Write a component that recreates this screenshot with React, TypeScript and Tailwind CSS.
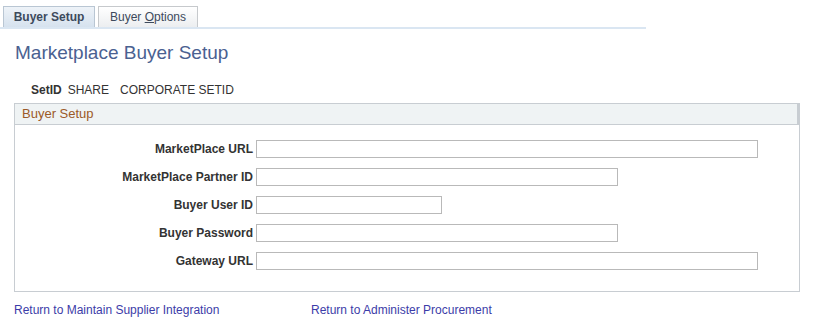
export default function App() {
  const fields = [
    { label: "MarketPlace URL", w: "w-[502px]" },
    { label: "MarketPlace Partner ID", w: "w-[362px]" },
    { label: "Buyer User ID", w: "w-[186px]" },
    { label: "Buyer Password", w: "w-[362px]" },
    { label: "Gateway URL", w: "w-[502px]" },
  ];

  return (
    <div className="w-[813px] h-[324px] bg-white text-[12px] text-[#333] font-['Liberation_Sans',Arial,sans-serif]">
      {/* Tabs */}
      <div className="pt-[6px] pl-[3px] w-[646px] border-b-[2px] border-[#dae6f2] flex items-end gap-[3px]">
        <div className="h-[21px] w-[92px] flex items-center justify-center border border-b-0 border-[#b9c6d3] bg-gradient-to-b from-[#eef3f8] to-[#d6e2ee] font-bold text-[#3d4a5c]">
          Buyer Setup
        </div>
        <div className="h-[21px] w-[100px] flex items-center justify-center border border-b-0 border-[#c6c9cc] bg-gradient-to-b from-[#ffffff] to-[#eceef0] text-[#3d4a5c]">
          Buyer&nbsp;<span className="underline">O</span>ptions
        </div>
      </div>

      {/* Title */}
      <h1 className="ml-[15px] mt-[12px] text-[19px] leading-[24px] text-[#4a6191]">
        Marketplace Buyer Setup
      </h1>

      {/* SetID row */}
      <div className="ml-[31px] mt-[18px] flex leading-[14px]">
        <span className="font-bold">SetID</span>
        <span className="ml-[6px]">SHARE</span>
        <span className="ml-[11px]">CORPORATE SETID</span>
      </div>

      {/* Group box */}
      <div className="ml-[14px] mt-[6px] w-[786px] h-[189px] border border-[#c8cdd2]">
        <div className="h-[21px] bg-[#eff3f4] border-b border-r-[2px] border-[#c8cdd2] pl-[7px] flex items-center text-[13px] text-[#9c5a28]">
          Buyer Setup
        </div>
        <div className="pt-[15px] flex flex-col gap-[10px]">
          {fields.map((f) => (
            <div key={f.label} className="flex items-center">
              <label className="w-[241px] text-right pr-[3px] font-bold">
                {f.label}
              </label>
              <div className={`${f.w} h-[18px] border border-[#b9b9b9] bg-white`} />
            </div>
          ))}
        </div>
      </div>

      {/* Links */}
      <div className="ml-[14px] mt-[9px] flex text-[#3c3ca8]">
        <a className="w-[297px] cursor-pointer">Return to Maintain Supplier Integration</a>
        <a className="cursor-pointer">Return to Administer Procurement</a>
      </div>
    </div>
  );
}
